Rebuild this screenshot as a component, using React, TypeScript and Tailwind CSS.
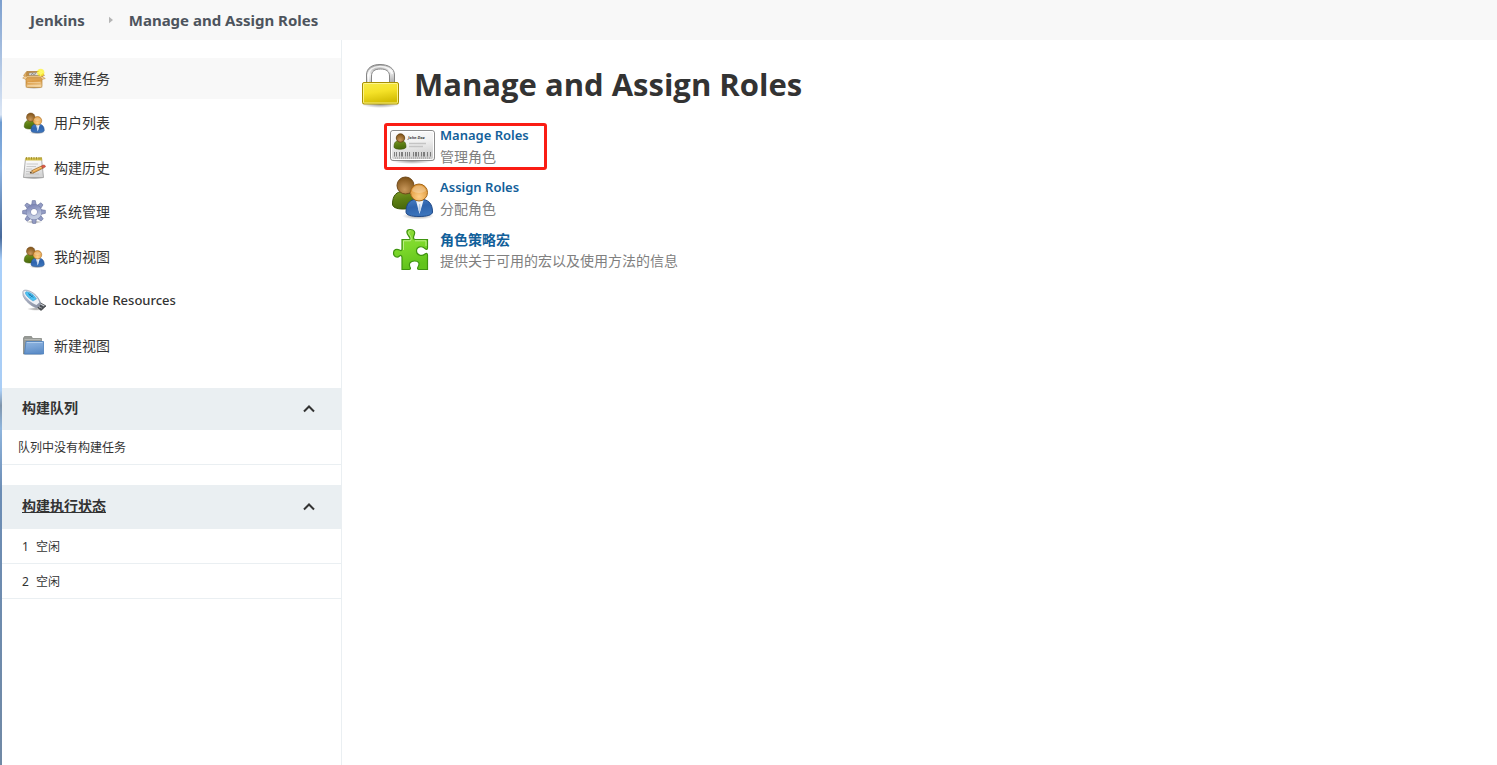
import type { ReactNode } from "react";

type IconProps = { className?: string };

function Gradients() {
  const linear: [string, string[]][] = [
    ["gold", ["#f6ea4a", "#f5e228", "#d3bd04"]],
    ["steel", ["#8f8f8f", "#f4f4f4", "#b4b4b4"]],
    ["green", ["#8fda3a", "#7ed92b", "#62c41c"]],
    ["card", ["#fdfdfd", "#f0f0f0", "#cfcfcf"]],
    ["olive", ["#7f9a28", "#5d8014", "#4a6a0c"]],
    ["blue", ["#4a80c6", "#2e63ad", "#3b74bb"]],
    ["box", ["#eec07a", "#d99a45", "#f1cf96"]],
    ["gear", ["#8189b8", "#9fa8cc", "#c2cbe0"]],
    ["folder", ["#8fb5e0", "#7aa4d6", "#5e8ec8"]],
    ["paper", ["#ffffff", "#f1f1f1", "#d5d5d5"]],
    ["stick", ["#d5dae6", "#aab1c6", "#9197a8"]],
  ];
  return (
    <svg className="absolute size-0" aria-hidden="true">
      <defs>
        {linear.map(([id, colors]) => (
          <linearGradient key={id} id={id} x1="0" y1="0" x2="0.25" y2="1">
            {colors.map((c, i) => (
              <stop key={c} offset={i / 2} stopColor={c} />
            ))}
          </linearGradient>
        ))}
        <radialGradient id="faceBack" cx="0.45" cy="0.75" r="0.75">
          <stop offset="0" stopColor="#c8975a" />
          <stop offset="1" stopColor="#7d5015" />
        </radialGradient>
        <radialGradient id="faceFront" cx="0.5" cy="0.75" r="0.75">
          <stop offset="0" stopColor="#ffcf87" />
          <stop offset="1" stopColor="#d98f2e" />
        </radialGradient>
        <radialGradient id="glow">
          <stop offset="0" stopColor="#ffffff" />
          <stop offset="0.4" stopColor="#ffff50" />
          <stop offset="1" stopColor="#fff000" stopOpacity="0.5" />
        </radialGradient>
        <radialGradient id="shade">
          <stop offset="0" stopColor="#000" stopOpacity="0.4" />
          <stop offset="1" stopColor="#000" stopOpacity="0" />
        </radialGradient>
      </defs>
    </svg>
  );
}

function UsersIcon({ className }: IconProps) {
  return (
    <svg viewBox="0 0 48 48" className={className} aria-hidden="true">
      <ellipse cx="30" cy="43" rx="16" ry="3.5" fill="url(#shade)" />
      <path d="M4.500 31C4.500 22 9 18.500 15 18.500S26 22 26 31C26 34 22 36 15 36S4.500 34 4.500 31Z" fill="url(#olive)" stroke="#3b5608" />
      <circle cx="17.500" cy="12.500" r="8.500" fill="url(#faceBack)" stroke="#70491a" />
      <path d="M18 39C18 30 22 26 31 26S44.500 30 44.500 39C44.500 42 39 43.500 31 43.500S18 42 18 39Z" fill="url(#blue)" stroke="#204a87" />
      <path d="M28 27.500L31.500 41L35.500 27.500Z" fill="#eef3fa" />
      <path d="M31 31L30.300 36L31.500 40L32.700 36L32.200 31Z" fill="#b8cde8" />
      <circle cx="31" cy="19.500" r="8.500" fill="url(#faceFront)" stroke="#a56718" />
      <path d="M24 18A7.200 7.200 0 0 1 38 18C34 20.500 28 20.500 24 18Z" fill="#fff" opacity="0.25" />
    </svg>
  );
}

function LockIcon({ className }: IconProps) {
  return (
    <svg viewBox="0 0 48 48" className={className} aria-hidden="true">
      <ellipse cx="23.500" cy="44.500" rx="19" ry="3.500" fill="url(#shade)" />
      <path d="M9.500 25V15C9.500 8 15 4.500 23 4.500S37.500 8 37.500 15V25H32.500V16C32.500 11 29 9 23.500 9S14.500 11 14.500 16V25Z" fill="url(#steel)" stroke="#858585" />
      <path d="M11.500 24V15.500C11.500 10 16 6.500 23 6.500S34 9 35.500 14" fill="none" stroke="#fff" strokeWidth="1.500" opacity="0.8" />
      <rect x="5.500" y="22.500" width="36" height="21.500" rx="1.500" fill="url(#gold)" stroke="#a89002" />
      <rect x="6.500" y="23.500" width="34" height="19.500" rx="1" fill="none" stroke="#fff9a0" opacity="0.8" />
    </svg>
  );
}

function CardIcon({ className }: IconProps) {
  const bars = [5, 7, 10, 12, 13, 16, 18, 20, 24, 26, 27, 29, 32, 34, 35, 38, 41];
  return (
    <svg viewBox="0 0 48 48" className={className} aria-hidden="true">
      <ellipse cx="24" cy="40" rx="20" ry="3" fill="url(#shade)" />
      <rect x="2.500" y="9.500" width="44" height="30" rx="2.500" fill="url(#card)" stroke="#8c8c8c" />
      <rect x="3.500" y="10.500" width="42" height="28" rx="2" fill="none" stroke="#fff" />
      <path d="M6 26C6 21 8 19.500 12 19.500S18 21 18 26C18 29 6 29 6 26Z" fill="url(#olive)" stroke="#3b5208" strokeWidth="0.600" />
      <circle cx="12.500" cy="17" r="4.200" fill="url(#faceBack)" stroke="#61400f" strokeWidth="0.800" />
      <text x="20" y="18" fontSize="4" fontWeight="700" fontStyle="italic" fontFamily="Noto Sans, sans-serif" fill="#444">
        John Doe
      </text>
      <path d="M21 22.500H38M21 25.500H35" stroke="#c4c4c4" strokeWidth="1.500" />
      {bars.map((x) => (
        <rect key={x} x={x + 1} y="31" width="0.800" height="4.500" fill="#666" />
      ))}
      <path d="M7 37H42" stroke="#888" strokeWidth="0.800" strokeDasharray="1 1" />
    </svg>
  );
}

function PuzzleIcon({ className }: IconProps) {
  return (
    <svg viewBox="0 0 48 48" className={className} aria-hidden="true">
      <path
        d="M14 14.500H21C22.500 14.500 22.500 13 21 11.500C18.500 9 17.500 4.500 22 4.500S27.500 7 26 10.500C25 13 25.500 14.500 27.500 14.500H39.500V23C39.500 24.500 38.500 25 37 23.500C34 20.500 28.500 21.500 28.500 26S34 31.500 37 29C38.500 28 39.500 28.500 39.500 30V44.500H31C29.500 44.500 29.200 43.500 30 42C32 38.500 31 36 26.500 36S20.500 39 22 42C22.800 43.500 22.500 44.500 21 44.500H14V32.500C14 30.500 12.500 30 11.500 31C9 33.500 5.500 31.500 5.500 28S8.500 23.500 11.500 25C13 26 14 25.500 14 24Z"
        fill="url(#green)"
        stroke="#3f9410"
        strokeWidth="1.200"
      />
      <path d="M15.500 25V15.800H22.500C24 13.500 22.500 11 21 9C20.200 7 21 5.800 22.500 5.800M27 15.800H38V21" fill="none" stroke="#c8f59a" opacity="0.800" />
    </svg>
  );
}

function PackageIcon({ className }: IconProps) {
  return (
    <svg viewBox="0 0 24 24" className={className} aria-hidden="true">
      <ellipse cx="12" cy="20.500" rx="9.500" ry="1.500" fill="url(#shade)" />
      <path d="M5 4.500H19L20.500 10H3.500Z" fill="#c08e48" stroke="#a97930" strokeWidth="0.700" />
      <path d="M7 6L17 5.500L17.500 8.500H7Z" fill="#e4e2da" stroke="#8f887a" strokeWidth="0.500" />
      <path d="M9 8L10 6.500L12 7.500L14 6.500" stroke="#666" fill="none" strokeWidth="0.700" />
      <path d="M4 10H20V19Q20 20.500 18.500 20.500H5.500Q4 20.500 4 19Z" fill="url(#box)" stroke="#b98538" strokeWidth="0.700" />
      <path d="M4 9H20V12.500H4Z" fill="#d9a050" />
      <path d="M4.500 9H19.500L23.300 11.500L20 12.500L19 10.500H5L4 12.500L0.700 11L4 8Z" fill="#f3cf98" stroke="#b98538" strokeWidth="0.500" />
      <path d="M4.500 4.500L1.500 8.500L4.500 9.500ZM19.500 4.500L22.500 8.500L19.500 9.500Z" fill="#dfae66" stroke="#b98538" strokeWidth="0.500" />
      <path d="M5.500 15.500H18.500M5.500 18.500H18.500" stroke="#f8ddb0" strokeWidth="1" opacity="0.600" />
      <circle cx="18.700" cy="5.500" r="3.700" fill="url(#glow)" />
      <path d="M18.700 2V9M15.200 5.500H22.200" stroke="#fff568" strokeWidth="1" />
    </svg>
  );
}

function NotepadIcon({ className }: IconProps) {
  return (
    <svg viewBox="0 0 24 24" className={className} aria-hidden="true">
      <ellipse cx="12" cy="22" rx="10.500" ry="1.500" fill="url(#shade)" />
      <path d="M3.500 2.500H19.500L21.500 21.500H1.500Z" fill="url(#paper)" stroke="#999" strokeWidth="0.800" />
      <path d="M3.500 1.500H20L20.300 4.500H3.200Z" fill="#d3c04c" />
      <path d="M4.500 1V3.500M7 1V3.500M9.500 1V3.500M12 1V3.500M14.500 1V3.500M17 1V3.500M19 1V3.500" stroke="#8f7d1c" strokeWidth="0.700" />
      <path d="M4.500 8H16M4.500 10.500H14M4 13H10M4 15.500H8M4 18H17" stroke="#bfbfbf" strokeWidth="0.800" />
      <path d="M8 17L10 14.500L19.500 10L20.800 12.300L11.500 17Z" fill="#e5a247" stroke="#8d5b1c" strokeWidth="0.600" />
      <path d="M10 14.500L11.500 17L8 17Z" fill="#f3dfb9" stroke="#8d5b1c" strokeWidth="0.500" />
      <path d="M8 17L9 15.700L9.800 17Z" fill="#222" />
      <path d="M10.800 15.300L20 10.800" stroke="#ffd38c" strokeWidth="0.700" />
      <path d="M19.300 10L21.500 9Q23.500 9 23.500 10.800L20.900 12.300Z" fill="#df5a46" stroke="#a33a2c" strokeWidth="0.500" />
    </svg>
  );
}

function GearIcon({ className }: IconProps) {
  const teeth = [0, 45, 90, 135, 180, 225, 270, 315];
  return (
    <svg viewBox="0 0 24 24" className={className} aria-hidden="true">
      <ellipse cx="12" cy="22" rx="8" ry="1.800" fill="url(#shade)" />
      {teeth.map((a) => (
        <path key={a} d="M9.600 5.500L10.300 0.600H13.300L14.400 5.500Z" transform={`rotate(${a} 12 12)`} fill="#929bc3" stroke="#69729c" strokeWidth="0.600" />
      ))}
      <circle cx="12" cy="12" r="5.500" fill="none" stroke="#7680aa" strokeWidth="5" />
      <circle cx="12" cy="12" r="5.500" fill="none" stroke="url(#gear)" strokeWidth="4.200" />
    </svg>
  );
}

function UsbIcon({ className }: IconProps) {
  return (
    <svg viewBox="0 0 24 24" className={className} aria-hidden="true">
      <ellipse cx="14" cy="20" rx="9" ry="1.800" fill="url(#shade)" />
      <path d="M14 17L18 13.500L24 17L19 21.500Z" fill="#4c5056" stroke="#282b2e" strokeWidth="0.600" />
      <path d="M18 14.800L22.300 17" stroke="#c9cdd2" strokeWidth="1.200" />
      <path d="M16.500 17.500L18 18.300M18.500 18.500L19.500 19" stroke="#ddd" strokeWidth="1" />
      <path d="M0.800 3C1 0.800 4 0.500 8 2.200C13 4.300 17 9 18.500 13.500L18 16L14.500 19C9 17 3 12 1 6.500Z" fill="url(#stick)" stroke="#8c93a5" strokeWidth="0.600" />
      <path d="M1.500 2.800C3 1 7 2 10.500 4.500C14 7 17 11 17.300 13.500L14.500 16C10 14.500 4 9.500 2 5Z" fill="#eef1f6" />
      <path d="M4 2.800C7 2.300 12 5.500 14.500 10L11 12C7 9.500 4 6.500 3.200 4Z" fill="#4cc2f3" stroke="#3a9bcc" strokeWidth="0.500" />
      <path d="M6 4.500L11.500 8.500M8 4.800V7M10.500 6.500L8.500 8.500" stroke="#1d6ea3" strokeWidth="0.800" />
    </svg>
  );
}

function FolderIcon({ className }: IconProps) {
  return (
    <svg viewBox="0 0 24 24" className={className} aria-hidden="true">
      <path d="M1.500 20V4L2.500 2.500H9.500L10.500 4.500H19.500V20Z" fill="#979a96" stroke="#7b7e7a" strokeWidth="0.700" />
      <path d="M2.500 5.500H18.500" stroke="#b6b8b4" strokeWidth="1" />
      <path d="M4 7.500H21.500V20H2.500Z" fill="url(#folder)" stroke="#4a7fbd" strokeWidth="0.800" />
      <path d="M4.700 8.500H20.500" stroke="#b5d0ee" strokeWidth="0.900" />
    </svg>
  );
}

function ChevronUp() {
  return (
    <svg viewBox="0 0 12 8" className="h-2 w-3" fill="none" stroke="#333" strokeWidth="2" aria-hidden="true">
      <path d="M1 6.500L6 1.500L11 6.500" />
    </svg>
  );
}

const tasks = [
  { label: "新建任务", Icon: PackageIcon },
  { label: "用户列表", Icon: UsersIcon },
  { label: "构建历史", Icon: NotepadIcon },
  { label: "系统管理", Icon: GearIcon },
  { label: "我的视图", Icon: UsersIcon },
  { label: "Lockable Resources", Icon: UsbIcon, text: "text-[13px] font-medium" },
  { label: "新建视图", Icon: FolderIcon },
];

const roleLinks = [
  { title: "Manage Roles", titleText: "text-[13px] font-semibold", text: "管理角色", Icon: CardIcon, marked: true },
  { title: "Assign Roles", titleText: "text-[13px] font-semibold", text: "分配角色", Icon: UsersIcon },
  { title: "角色策略宏", titleText: "text-sm font-bold", text: "提供关于可用的宏以及使用方法的信息", Icon: PuzzleIcon },
];

const executors = [1, 2];

function PaneHeader({ name, className, children }: { name: string; className: string; children: ReactNode }) {
  return (
    <header className={`flex items-center justify-between bg-[#eaeff2] pr-[26px] pl-5 ${className}`}>
      <h2 className="pb-0.5 text-sm leading-5 font-bold text-[#333]">{children}</h2>
      <button type="button" aria-label={name}>
        <ChevronUp />
      </button>
    </header>
  );
}

export default function App() {
  return (
    <div className="flex min-h-screen bg-white font-['Noto_Sans','Noto_Sans_CJK_SC',sans-serif] text-[#333]">
      <Gradients />
      <div className="w-0.5 shrink-0 bg-[linear-gradient(#7c9fce,#dbe6f5_15%,#6c9ad0_16%,#8fb6e4_22%,#47699a_31%,#a9d0fa_34%,#a9cdf5_51%,#7f95ac_53%,#8fb5dd_56%,#6c8db5_64%,#7089a5)]" />
      <div className="flex min-w-0 grow flex-col">
        <nav className="flex h-10 items-center bg-[#f8f8f8] pl-7 text-[15px] font-bold text-[#4d545d]">
          <a href="#jenkins">Jenkins</a>
          <svg viewBox="0 0 5 8" className="mr-4 ml-6 h-2 w-1" aria-hidden="true">
            <path d="M0 0L5 4L0 8Z" fill="#b5b5b5" />
          </svg>
          <a href="#roles">Manage and Assign Roles</a>
        </nav>

        <div className="flex grow">
          <aside className="w-[340px] shrink-0 border-r border-[#eaeff2] pt-[18px]">
            <ul className="flex h-[308px] flex-col justify-between">
              {tasks.map(({ label, Icon, text = "text-sm" }, i) => (
                <li key={label}>
                  <a
                    href="#task"
                    className={`flex h-[41px] items-center gap-2 pl-5 ${text} ${i === 0 ? "bg-[#f8f8f8]" : ""}`}
                  >
                    <Icon className="size-6" />
                    {label}
                  </a>
                </li>
              ))}
            </ul>

            <section className="mt-[22px]">
              <PaneHeader name="折叠构建队列" className="h-[42px]">
                构建队列
              </PaneHeader>
              <p className="border-b border-[#eaeff2] px-4 pt-[9px] pb-[7px] text-xs leading-[18px]">队列中没有构建任务</p>
            </section>

            <section className="mt-5">
              <PaneHeader name="折叠构建执行状态" className="h-11">
                <a href="#executors" className="underline">
                  构建执行状态
                </a>
              </PaneHeader>
              <table className="w-full border-separate border-spacing-0 text-xs">
                <tbody>
                  {executors.map((n) => (
                    <tr key={n} className="h-[35px]">
                      <td className="w-[34px] border-b border-[#eaeff2] pt-0.5 pl-5">{n}</td>
                      <td className="border-b border-[#eaeff2] pt-0.5">空闲</td>
                    </tr>
                  ))}
                </tbody>
              </table>
            </section>
          </aside>

          <main className="min-w-0 grow pt-5 pl-[15px]">
            <h1 className="flex items-center gap-[9px] font-['Open_Sans','Noto_Sans_CJK_SC',sans-serif] text-[31px] leading-[48px] font-bold">
              <LockIcon className="size-12" />
              Manage and Assign Roles
            </h1>
            <ul className="mt-[13px] flex flex-col gap-1 pl-[31px]">
              {roleLinks.map(({ title, titleText, text, Icon, marked }) => (
                <li key={title} className="relative flex h-12 gap-1">
                  <Icon className="size-12" />
                  <div className="pt-1 text-sm leading-[21px]">
                    <a href="#role" className={`block leading-[21px] text-[#12609a] ${titleText}`}>
                      {title}
                    </a>
                    <p className="text-[#808080]">{text}</p>
                  </div>
                  {marked && (
                    <span className="absolute top-0.5 -left-1 h-[47px] w-[163px] rounded-[3px] border-3 border-[#fa1d14]" />
                  )}
                </li>
              ))}
            </ul>
          </main>
        </div>
      </div>
    </div>
  );
}
